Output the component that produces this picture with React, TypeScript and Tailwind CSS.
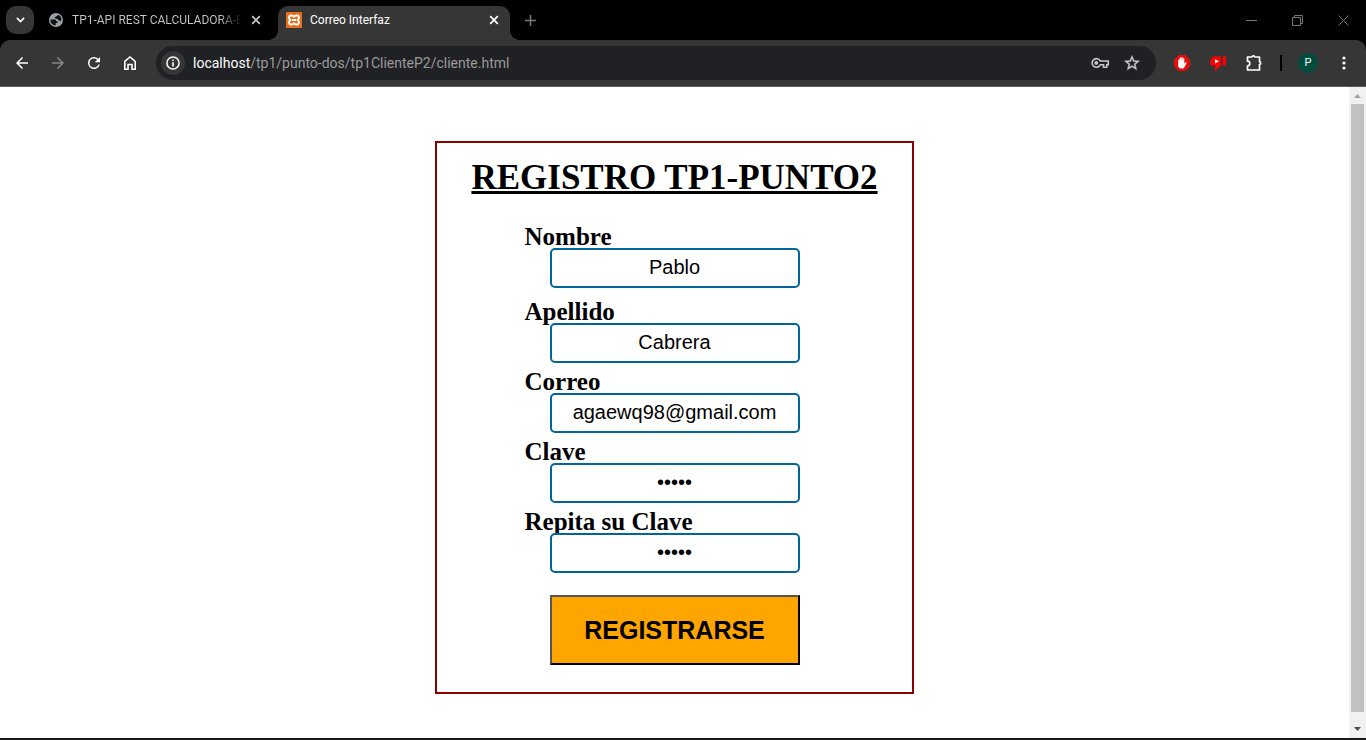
import type { ReactNode } from 'react'

const iconButton = 'flex size-6 shrink-0 items-center justify-center'

function Icon({ children, className = 'size-5' }: { children: ReactNode; className?: string }) {
  return (
    <svg viewBox="0 0 24 24" className={className} fill="currentColor" aria-hidden="true">
      {children}
    </svg>
  )
}

function CloseIcon() {
  return (
    <svg viewBox="0 0 10 10" className="size-[10px]" fill="none" stroke="currentColor" strokeWidth="1.7" aria-hidden="true">
      <path d="M1.200 1.200l7.600 7.600M8.800 1.200l-7.600 7.600" />
    </svg>
  )
}

function TabBar() {
  return (
    <header className="flex h-10 items-start bg-black text-[#c7c7c7]">
      <button aria-label="Buscar pestañas" className="mt-[6px] ml-[6px] flex size-7 shrink-0 items-center justify-center rounded-[10px] bg-[#363636] text-white">
        <svg viewBox="0 0 10 7" className="w-[9px]" fill="none" stroke="currentColor" strokeWidth="1.8" aria-hidden="true">
          <path d="M1 1l4 4 4-4" />
        </svg>
      </button>
      <div className="mt-[6px] ml-[15px] flex h-7 w-[229px] items-center">
        <svg viewBox="0 0 14 14" className="size-[14px] shrink-0" aria-hidden="true">
          <circle cx="7" cy="7" r="7" fill="#9aa0a6" />
          <path d="M1.6 6.4l4.200.1c1 .2 1.500.9 1.400 1.800H8.600v1.600l-1.900.2v2.100C3.300 12.200 1.100 9.500 1.600 6.400z" fill="#111" />
          <path d="M8.800 1.700c-.2 1.100-.8 1.500-1.900 1.500-.2.800-.6 1.200-1.500 1.300.3 1 1 1.300 3.200 1.300.4 1 .9 1.600 1.800 1.600.8 0 1.300.4 1.500 1 1.300-2.700 0-5.800-3.100-6.700z" fill="#111" />
        </svg>
        <span className="ml-[9px] w-[168px] bg-linear-to-r from-[#c7c7c7] from-88% to-[#111] bg-clip-text font-[Roboto,sans-serif] text-xs whitespace-nowrap text-transparent">
          TP1-API REST CALCULADORA-E
        </span>
        <button aria-label="Cerrar pestaña TP1-API REST" className="ml-[6px] flex size-5 items-center justify-center">
          <CloseIcon />
        </button>
      </div>
      <div className="relative mt-[6px] flex h-[34px] w-[232px] items-center rounded-t-[10px] bg-[#363636] pb-[6px] pl-2 text-white">
        <span className="absolute bottom-0 -left-[10px] size-[10px] bg-[radial-gradient(circle_at_0_0,#000_10px,#363636_10px)]" />
        <span className="absolute -right-[10px] bottom-0 size-[10px] bg-[radial-gradient(circle_at_100%_0,#000_10px,#363636_10px)]" />
        <svg viewBox="0 0 16 16" className="size-4 shrink-0" aria-hidden="true">
          <rect width="16" height="16" rx="1" fill="#ea6f1c" />
          <path d="M8 4.800C6.500 2.800 3 3.200 3 5.400 3 6.900 3.800 7.500 4.600 8 3.800 8.500 3 9.100 3 10.600c0 2.200 3.500 2.600 5 .6 1.500 2 5 1.600 5-.6 0-1.500-.8-2.100-1.600-2.600.8-.5 1.600-1.100 1.600-2.600 0-2.200-3.500-2.600-5-.6zM6 8h4" fill="none" stroke="#fff" strokeWidth="1.900" strokeLinejoin="round" />
        </svg>
        <span className="ml-2 grow font-[Roboto,sans-serif] text-xs whitespace-nowrap">Correo Interfaz</span>
        <button aria-label="Cerrar pestaña Correo Interfaz" className="mr-[6px] flex size-5 items-center justify-center">
          <CloseIcon />
        </button>
      </div>
      <button aria-label="Nueva pestaña" className="mt-[6px] ml-[6px] flex size-7 items-center justify-center text-[#777]">
        <svg viewBox="0 0 11 11" className="size-[11px]" stroke="currentColor" strokeWidth="1.500" aria-hidden="true">
          <path d="M5.500 0v11M0 5.500h11" />
        </svg>
      </button>
      <div className="ml-auto flex h-10 text-[#777]">
        <button aria-label="Minimizar" className="flex w-[46px] items-center justify-center">
          <svg viewBox="0 0 11 11" className="size-[11px]" stroke="currentColor" aria-hidden="true"><path d="M0 5.500h11" /></svg>
        </button>
        <button aria-label="Restaurar" className="flex w-[46px] items-center justify-center">
          <svg viewBox="0 0 11 11" className="size-[11px]" fill="none" stroke="currentColor" aria-hidden="true">
            <path d="M.5 2.500h8v8h-8zM2.500 2.500v-2h8v8h-2" />
          </svg>
        </button>
        <button aria-label="Cerrar ventana" className="flex w-[46px] items-center justify-center">
          <svg viewBox="0 0 11 11" className="size-[11px]" fill="none" stroke="currentColor" aria-hidden="true"><path d="M.5.5l10 10M10.500.5l-10 10" /></svg>
        </button>
      </div>
    </header>
  )
}

function Toolbar() {
  return (
    <div className="bg-black">
      <nav className="flex h-[47px] items-center rounded-t-[10px] border-b border-[#5c5c5c] bg-[#363636] px-[10px] text-white">
        <div className="flex gap-3">
          <button aria-label="Atrás" className={iconButton}>
            <Icon className="size-[18px]"><path d="M20 11H7.800l5.600-5.600L12 4l-8 8 8 8 1.400-1.400L7.800 13H20z" /></Icon>
          </button>
          <button aria-label="Adelante" className={`${iconButton} text-[#868686]`}>
            <Icon className="size-[18px]"><path d="M4 11h12.200l-5.600-5.600L12 4l8 8-8 8-1.400-1.400 5.600-5.600H4z" /></Icon>
          </button>
          <button aria-label="Recargar" className={iconButton}>
            <Icon className="size-[18px]"><path d="M17.650 6.350A8 8 0 1 0 19.730 14h-2.080A6 6 0 1 1 12 6c1.660 0 3.140.69 4.220 1.780L13 11h7V4z" /></Icon>
          </button>
          <button aria-label="Inicio" className={iconButton}>
            <svg viewBox="0 0 14 16" className="h-4 w-[14px]" fill="none" stroke="currentColor" strokeWidth="1.600" aria-hidden="true">
              <path d="M1.800 14.200V6.300L7 2l5.200 4.300v7.900H9V9.500H5v4.700z" />
            </svg>
          </button>
        </div>
        <div className="ml-[14px] flex h-[34px] grow items-center rounded-full bg-[#202124] pr-3 pl-[5px]">
          <button aria-label="Información del sitio" className="flex size-6 shrink-0 items-center justify-center rounded-full bg-[#363636]">
            <svg viewBox="0 0 14 14" className="size-[14px]" aria-hidden="true">
              <circle cx="7" cy="7" r="6.100" fill="none" stroke="#fff" strokeWidth="1.500" />
              <path d="M6.200 3.400h1.600V5H6.200zM6.200 6.200h1.600v4.400H6.200z" fill="#fff" />
            </svg>
          </button>
          <p className="ml-2 grow font-[Roboto,sans-serif] text-sm whitespace-nowrap text-[#9a9a9a]">
            <span className="text-white">localhost</span>/tp1/punto-dos/tp1ClienteP2/cliente.html
          </p>
          <div className="flex gap-2 text-[#c7c7c7]">
            <button aria-label="Contraseñas" className={iconButton}>
              <svg viewBox="0 0 18 12" className="h-3 w-[18px]" fill="none" stroke="currentColor" strokeWidth="1.600" aria-hidden="true">
                <path d="M9.300 4h7.900v3.800h-1.500v2.400h-3.200V7.800H9.300a4.300 4.300 0 1 1 0-3.800z" />
                <circle cx="5.300" cy="5.900" r="1.900" fill="currentColor" stroke="none" />
              </svg>
            </button>
            <button aria-label="Agregar a favoritos" className={iconButton}>
              <Icon className="size-[18px]"><path d="M22 9.240l-7.190-.62L12 2 9.190 8.630 2 9.240l5.460 4.730L5.820 21 12 17.270 18.180 21l-1.630-7.030zM12 15.400l-3.760 2.270 1-4.280-3.320-2.880 4.380-.38L12 6.100l1.710 4.040 4.380.38-3.320 2.880 1 4.280z" stroke="currentColor" strokeWidth=".6" /></Icon>
            </button>
          </div>
        </div>
        <div className="ml-[14px] flex items-center gap-3">
          <button aria-label="AdBlock" className={iconButton}>
            <svg viewBox="0 0 16 16" className="size-4" aria-hidden="true">
              <path d="M4.700 0h6.600L16 4.700v6.600L11.300 16H4.700L0 11.300V4.700z" fill="#e40d0d" />
              <path d="M4.200 8.400V5a.6.6 0 0 1 1.200 0v2.500h.2V3.300a.7.700 0 0 1 1.400 0v2h.2V2.700a.7.700 0 0 1 1.500 0v2.800H9V3.600a.7.700 0 0 1 1.300 0v5.200l1-1.200c.5-.5 1.300-.2 1.200.4l-2.100 4.200c-.5.900-1.200 1.300-2.200 1.300H7.500c-2 0-3.300-1.100-3.300-3z" fill="#fff" />
            </svg>
          </button>
          <button aria-label="No me gusta de YouTube" className={iconButton}>
            <svg viewBox="0 0 16 15" className="h-[15px] w-4" fill="#f00" aria-hidden="true">
              <path d="M2.500.5H11v8.700L5.700 14.500l-1.200-1.200.9-3.800H1.200L0 8.200V6.500zM12.600.5H16v9h-3.400z" />
              <path d="M5 3.200v4.200l4-2.100z" fill="#fff" />
            </svg>
          </button>
          <button aria-label="Extensiones" className={iconButton}>
            <svg viewBox="1 0 17 18" className="h-[18px] w-[17px]" fill="none" stroke="currentColor" strokeWidth="1.700" aria-hidden="true">
              <path d="M2.500 3h4.300a1.700 1.700 0 0 1 3.200 0h4.500v4.400a1.700 1.700 0 0 1 0 3.200V16h-12v-4.200a2.300 2.300 0 0 0 0-4.600z" strokeLinejoin="round" />
            </svg>
          </button>
        </div>
        <span className="ml-[14px] h-4 w-[2px] bg-black" />
        <div className="ml-4 flex items-center gap-[14px]">
          <button aria-label="Perfil" className="flex size-5 items-center justify-center rounded-full bg-[#004d40] font-[Roboto,sans-serif] text-[11px] text-white">P</button>
          <button aria-label="Menú" className={iconButton}>
            <svg viewBox="0 0 4 14" className="h-[14px] w-1" fill="currentColor" aria-hidden="true">
              <circle cx="2" cy="2" r="1.600" /><circle cx="2" cy="7" r="1.600" /><circle cx="2" cy="12" r="1.600" />
            </svg>
          </button>
        </div>
      </nav>
    </div>
  )
}

type FieldProps = { id: string; label: string; type: string; value: string; spacing: string }

const fields: FieldProps[] = [
  { id: 'nombre', label: 'Nombre', type: 'text', value: 'Pablo', spacing: 'mb-[10px]' },
  { id: 'apellido', label: 'Apellido', type: 'text', value: 'Cabrera', spacing: 'mb-[5px]' },
  { id: 'correo', label: 'Correo', type: 'email', value: 'agaewq98@gmail.com', spacing: 'mb-[5px]' },
  { id: 'clave', label: 'Clave', type: 'password', value: '12345', spacing: 'mb-[5px]' },
  { id: 'clave2', label: 'Repita su Clave', type: 'password', value: '12345', spacing: 'mb-[22px]' },
]

function Field({ id, label, type, value, spacing }: FieldProps) {
  return (
    <div className={spacing}>
      <label htmlFor={id} className="block h-[25px] font-['Liberation_Serif',serif] text-[25px] leading-[28px] font-bold">{label}</label>
      <input id={id} type={type} defaultValue={value} autoComplete="off" className="relative ml-[25px] block h-10 w-[250px] rounded-[5px] border-2 border-[#006699] bg-white pb-[2px] text-center font-['Liberation_Sans',sans-serif] text-xl outline-none" />
    </div>
  )
}

function Scrollbar() {
  return (
    <div className="flex w-[17px] shrink-0 flex-col items-center bg-[#f1f1f1]" aria-hidden="true">
      <svg viewBox="0 0 17 17" className="size-[17px]" fill="#a3a3a3"><path d="M5 11l3.500-4 3.500 4z" /></svg>
      <div className="mb-[9px] w-[13px] grow bg-[#c1c1c1]" />
      <svg viewBox="0 0 17 17" className="size-[17px]" fill="#505050"><path d="M5 6l3.500 4L12 6z" /></svg>
    </div>
  )
}

export default function App() {
  return (
    <div className="flex min-h-screen flex-col bg-white font-['Open_Sans','Noto_Sans',sans-serif] text-black">
      <TabBar />
      <Toolbar />
      <div className="flex grow">
        <main className="grow pt-[54px] pb-11">
          <form className="mx-auto flex w-[479px] flex-col items-center border-2 border-[#8b0000] pb-[27px]" onSubmit={(e) => e.preventDefault()}>
            <h1 className="mt-[15px] mb-[25px] font-['Liberation_Serif',serif] text-[35px] leading-[40px] font-bold whitespace-nowrap underline decoration-3">REGISTRO TP1-PUNTO2</h1>
            <div className="w-[300px]">
              {fields.map((f) => <Field key={f.id} {...f} />)}
              <button type="submit" className="ml-[25px] block h-[70px] w-[250px] border-2 border-t-[#555] border-r-black border-b-black border-l-[#555] bg-[#ffa500] pt-[2px] font-['Liberation_Sans',sans-serif] text-[25px] font-bold">REGISTRARSE</button>
            </div>
          </form>
        </main>
        <Scrollbar />
      </div>
      <div className="h-[2px] bg-[#1b181b]" />
    </div>
  )
}
